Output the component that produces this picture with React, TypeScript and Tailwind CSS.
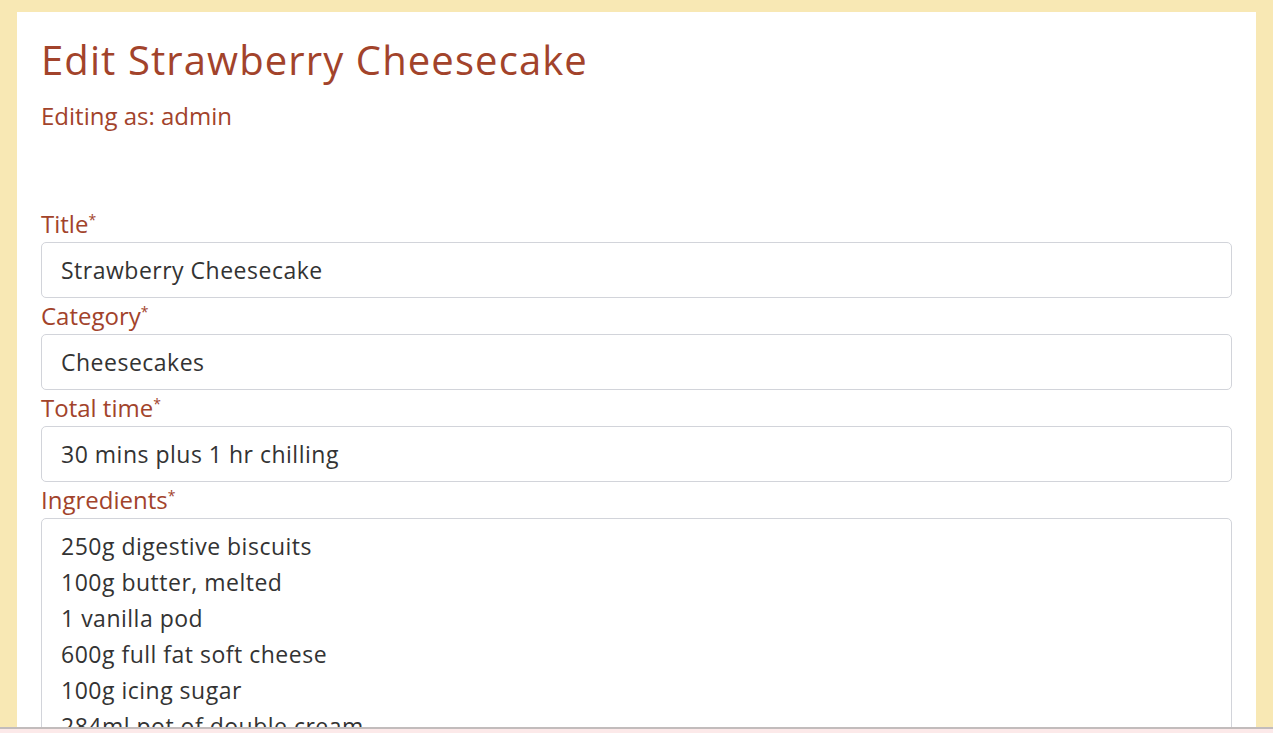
import React from "react";

const Label = ({ children }: { children: React.ReactNode }) => (
  <label className="block text-[24px] leading-[36px] text-[#a2432b]">
    {children}
    <span className="text-[14px] align-top leading-[28px]">*</span>
  </label>
);

const Input = ({ value }: { value: string }) => (
  <div className="h-[56px] w-full rounded-[5px] border border-[#d2d4da] bg-white px-[19px] flex items-center text-[23px] tracking-[0.5px] text-[#333333]">
    {value}
  </div>
);

export default function App() {
  const ingredients = [
    "250g digestive biscuits",
    "100g butter, melted",
    "1 vanilla pod",
    "600g full fat soft cheese",
    "100g icing sugar",
    "284ml pot of double cream",
    "500g strawberries",
  ];
  return (
    <div className="h-[733px] overflow-hidden bg-[#f8e8b4] pt-[12px] px-[17px] font-['Open_Sans',sans-serif] [font-variant-ligatures:none]">
      <div className="bg-white px-[24px] pt-[24px] pb-[40px]">
        <h1 className="text-[40px] leading-[48px] tracking-[1.1px] text-[#a2432b] mb-[17px]">
          Edit Strawberry Cheesecake
        </h1>
        <h4 className="text-[24px] leading-[30px] text-[#a2432b]">Editing as: admin</h4>
        <form className="mt-[75px] flex flex-col">
          <Label>Title</Label>
          <Input value="Strawberry Cheesecake" />
          <Label>Category</Label>
          <Input value="Cheesecakes" />
          <Label>Total time</Label>
          <Input value="30 mins plus 1 hr chilling" />
          <Label>Ingredients</Label>
          <div className="w-full rounded-[5px] border border-[#d2d4da] bg-white px-[19px] pt-[9px] pb-[9px] text-[23px] leading-[36px] tracking-[0.5px] text-[#333333] h-[300px]">
            {ingredients.map((i) => (
              <div key={i}>{i}</div>
            ))}
          </div>
        </form>
      </div>
      <div className="fixed left-0 right-0 bottom-0 h-[6px] border-t-2 border-[#c2bcbc] bg-[#fce9e9]" />
    </div>
  );
}
